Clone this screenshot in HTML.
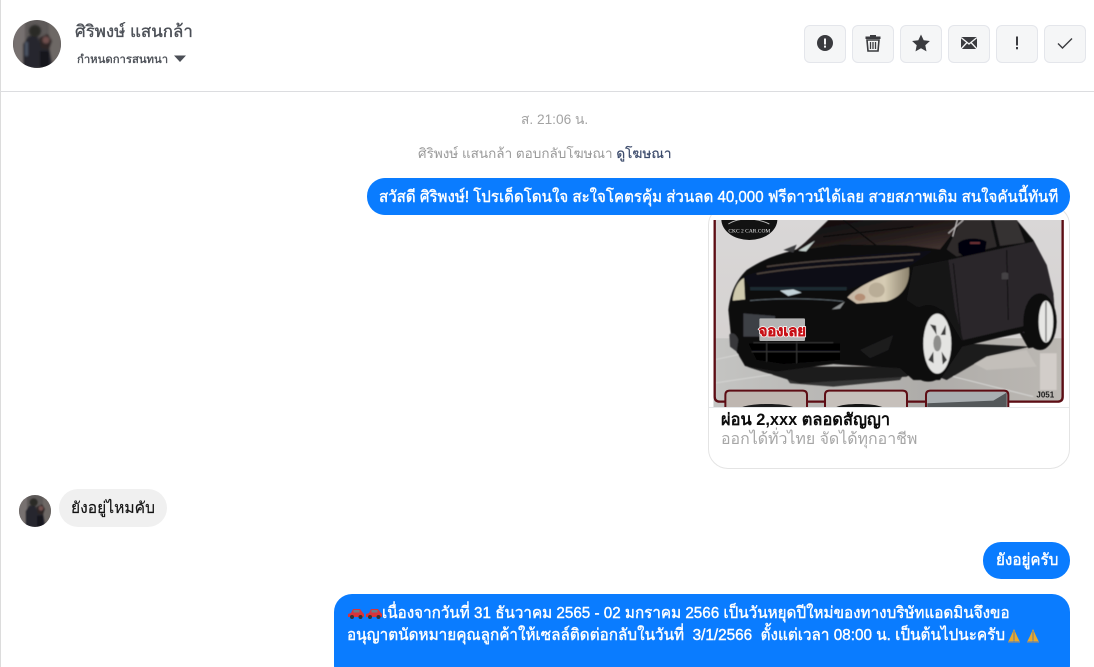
<!DOCTYPE html>
<html lang="th"><head><meta charset="utf-8"><title>Chat</title>
<style>
html,body{margin:0;padding:0;background:#fff;width:1094px;height:667px;overflow:hidden}
body{position:relative;font-family:"Liberation Sans","Noto Sans CJK SC",sans-serif}
.t{position:absolute;white-space:nowrap;line-height:20px;font-family:"Liberation Sans","Noto Sans CJK SC",sans-serif;transform-origin:left center}
.b{position:absolute;background:#0a7cff;border-radius:18px}
.btn{position:absolute;top:25px;width:40px;height:36px;background:#f5f6f7;border:1px solid #e4e6eb;border-radius:6px}
.btn svg{position:absolute;left:7px;top:5px}
.w{color:#fff;font-size:16px;font-weight:500;-webkit-text-stroke:.4px #fff}
</style></head><body>
<div style="position:absolute;left:0;top:0;width:1px;height:667px;background:#dcdcdc"></div>
<div style="position:absolute;left:0;top:91px;width:1094px;height:1px;background:#dcdde0"></div>

<svg style="position:absolute;left:13px;top:20px" width="48" height="48" viewBox="0 0 48 48">
<defs><clipPath id="a"><circle cx="24" cy="24" r="24"/></clipPath><filter id="bl"><feGaussianBlur stdDeviation="1"/></filter></defs>
<g clip-path="url(#a)"><rect width="48" height="48" fill="#5d5958"/><g filter="url(#bl)">
<rect x="0" y="0" width="12" height="48" fill="#77716f"/><rect x="36" y="0" width="12" height="48" fill="#6d6765"/>
<path d="M10 48V24l6-8h8l4 8 8 2 4 22z" fill="#25262e"/><circle cx="22" cy="11" r="6" fill="#2c2928"/><path d="M26 18l9-4 4 7-3 9-8-2z" fill="#2d2627"/><circle cx="33" cy="20" r="3.500" fill="#70504d"/><rect x="27" y="31" width="9" height="17" fill="#17161a"/><rect x="12" y="22" width="3" height="14" fill="#4c5465"/></g></g></svg>
<div class="t" style="left:75px;top:22px;font-size:16.900px;color:#4b4f56;-webkit-text-stroke:.35px #4b4f56">ศิริพงษ์ แสนกล้า</div>
<div class="t" style="left:77px;top:50px;font-size:11.300px;color:#4b4f56;-webkit-text-stroke:.35px #4b4f56">กำหนดการสนทนา</div>
<svg style="position:absolute;left:174px;top:55px" width="13" height="8"><path d="M0 .5h12L6 7z" fill="#4b4f56"/></svg>

<div class="btn" style="left:804px"><svg width="24" height="24" viewBox="0 0 24 24"><circle cx="13" cy="12" r="8" fill="#3a3b3f"/><rect x="12" y="7.500" width="2" height="6" fill="#f5f6f7"/><rect x="12" y="14.600" width="2" height="2" fill="#f5f6f7"/></svg></div>
<div class="btn" style="left:852px"><svg width="24" height="24" viewBox="0 0 24 24"><path d="M10 5.500V4h6v1.500h4.500V8h-15V5.500z" fill="#3a3b3f"/><path d="M7 9h12l-1 11H8z" fill="none" stroke="#3a3b3f" stroke-width="1.600"/><path d="M10.500 11v7M13 11v7M15.500 11v7" stroke="#3a3b3f" stroke-width="1.300"/></svg></div>
<div class="btn" style="left:900px"><svg width="24" height="24" viewBox="0 0 24 24"><path d="M13 3.500l2.700 5.700 6.200.8-4.600 4.200 1.200 6.200L13 17.300l-5.500 3.100 1.200-6.200L4.100 10l6.200-.8z" fill="#3a3b3f"/></svg></div>
<div class="btn" style="left:948px"><svg width="24" height="24" viewBox="0 0 24 24"><rect x="5" y="6" width="16" height="12" fill="#3a3b3f"/><path d="M5 6.500l8 6.500 8-6.500M5 18l6-6.500M21 18l-6-6.500" stroke="#f5f6f7" stroke-width="1.300" fill="none"/></svg></div>
<div class="btn" style="left:996px"><svg width="24" height="24" viewBox="0 0 24 24"><rect x="12" y="5.500" width="2" height="9" fill="#3a3b3f"/><rect x="12" y="16" width="2" height="2.300" fill="#3a3b3f"/></svg></div>
<div class="btn" style="left:1044px"><svg width="24" height="24" viewBox="0 0 24 24"><path d="M6 12.500l4.500 4.500L20 7.500" fill="none" stroke="#3a3b3f" stroke-width="1.400"/></svg></div>

<div class="t" style="left:521px;top:110px;font-size:13.700px;color:#a3a3a3">ส. 21:06 น.</div>
<div class="t" style="left:418px;top:144px;font-size:13.500px;color:#9a9a9a">ศิริพงษ์ แสนกล้า ตอบกลับโฆษณา <span style="color:#3b4a6b;-webkit-text-stroke:.2px #3b4a6b">ดูโฆษณา</span></div>

<div style="position:absolute;left:708px;top:205px;width:360px;height:262px;border:1px solid #e4e4e4;border-radius:20px;background:#fff"></div>
<div class="b" style="left:367px;top:178px;width:703px;height:37px"></div>
<div class="t w" style="left:379px;top:188px;transform:scaleX(.943)">สวัสดี ศิริพงษ์! โปรเด็ดโดนใจ สะใจโคตรคุ้ม ส่วนลด 40,000 ฟรีดาวน์ได้เลย สวยสภาพเดิม สนใจคันนี้ทันที</div>

<svg style="position:absolute;left:700px;top:210px" width="380" height="197.300" viewBox="0 0 1140 592">
<defs>
<clipPath id="c"><path d="M40 30H1092V560q0 18-18 18H925V592H40V560z"/></clipPath>
<filter id="s" x="-5%" y="-5%" width="110%" height="110%"><feGaussianBlur stdDeviation="1.500"/></filter>
<linearGradient id="wall" x1="0" y1="0" x2="0" y2="1"><stop offset="0" stop-color="#d9d7d7"/><stop offset="1" stop-color="#d3cfcd"/></linearGradient>
<linearGradient id="fl" x1="0" y1="0" x2="1" y2="0"><stop offset="0" stop-color="#c4c4c2"/><stop offset=".6" stop-color="#aeaca9"/><stop offset="1" stop-color="#bcb8b3"/></linearGradient>
<linearGradient id="ws" x1="0" y1="0" x2="1" y2="1"><stop offset="0" stop-color="#0d0b0c"/><stop offset=".55" stop-color="#241c1b"/><stop offset="1" stop-color="#4a3a37"/></linearGradient>
<linearGradient id="hl" x1="0" y1="0" x2="1" y2="0"><stop offset="0" stop-color="#c4b4a2"/><stop offset=".6" stop-color="#d6ccb4"/><stop offset="1" stop-color="#8d836e"/></linearGradient>
</defs>
<g clip-path="url(#c)">
<rect x="40" y="30" width="1052" height="562" fill="url(#wall)"/>
<rect x="40" y="385" width="1052" height="207" fill="url(#fl)"/>
<g filter="url(#s)">
<path d="M40 450L300 395M40 520L240 490M760 500L1000 560" stroke="#d4d4d2" stroke-width="3"/>
<path d="M1020 430h50v110h-50z" fill="#d2cdc9"/>
<path d="M800 450L980 420L1010 470L860 480z" fill="#c3bfba"/>
<path d="M250 490L620 480L600 510L400 530L270 520z" fill="#353434"/>
<path d="M140 470L640 470L740 510L860 440L990 410L790 400L620 500L300 520z" fill="#1f1d1e"/>
<path d="M85 300C90 260 100 220 140 180C200 140 250 130 290 118L400 30H950L1000 90L1040 165L1060 250L1066 340L1040 405L985 415L960 370L790 405L760 450L720 510L640 510L600 475L400 462L230 485L135 468L95 400Z" fill="#0c0b0d"/>
<path d="M745 150L1000 95L1040 165L1060 250L1066 340L1040 395L960 365L790 395L765 300Z" fill="#29262a"/>
<path d="M920 120L925 330M760 160L785 395" stroke="#100f11" stroke-width="3" fill="none"/>
<path d="M640 170L745 150L765 300L790 400L730 300L650 290L620 270Z" fill="#171619"/>
<path d="M290 122L385 30H790L720 118L620 106L420 104Z" fill="url(#ws)"/>
<path d="M430 30L530 108M370 80L640 50" stroke="#090808" stroke-width="4" fill="none"/>
<path d="M295 122L345 92L318 124Z" fill="#c5d0cc"/>
<path d="M250 120L290 104L280 128Z" fill="#3a3a3c"/>
<path d="M740 118L785 30H872L890 110L770 140Z" fill="#2f2a2c"/>
<path d="M882 30H950L975 98L900 108Z" fill="#353033"/>
<path d="M745 70L790 30" stroke="#a9a5a5" stroke-width="4"/>
<path d="M758 80L772 30" stroke="#c9c5c5" stroke-width="3"/>
<path d="M774 100C790 82 840 82 860 95L855 125L790 138L776 128Z" fill="#060607"/>
<path d="M810 99h30" stroke="#6a3034" stroke-width="6"/>
<path d="M130 200C250 150 480 130 700 122L628 170L445 240L150 235Z" fill="#100f12"/>
<path d="M170 192C300 168 500 162 640 150M200 170C350 150 500 145 660 132" stroke="#4a403a" stroke-width="5" fill="none"/>
<path d="M150 236H440" stroke="#1d2a30" stroke-width="10"/>
<path d="M240 242l40-4 25 10-40 10z" fill="#c3d2d8"/>
<path d="M150 272C230 264 340 264 430 274" stroke="#596268" stroke-width="3" fill="none"/>
<path d="M395 298l40-24-15 22z" fill="#8b8f90"/>
<path d="M442 262C480 222 560 190 627 172C632 225 605 262 560 274L470 281Z" fill="url(#hl)"/>
<ellipse cx="530" cy="240" rx="24" ry="22" fill="#b9ad97"/><ellipse cx="480" cy="262" rx="16" ry="11" fill="#b58f76"/>
<path d="M98 272C100 240 115 212 132 204L135 268Z" fill="#cfc9ad"/>
<path d="M130 310L225 318V380H130Z" fill="#3d4045"/>
<path d="M88 375C92 365 110 370 115 390L110 425L90 410Z" fill="#37383b"/>
<path d="M145 400H420V450L250 462L170 450Z" fill="#060606"/>
<path d="M160 398H400M155 425H420M200 395V455M290 395V460" stroke="#3a3a3b" stroke-width="3"/>
<path d="M480 420L580 375L565 420L510 445Z" fill="#1b1b1d"/>
<path d="M770 395L985 345L985 362L780 412Z" fill="#0c0b0c"/>
<path d="M905 190a14 10 0 0 1 20 0v18h-20z" fill="#454244"/>
<ellipse cx="1020" cy="335" rx="50" ry="85" fill="#0b0b0c"/>
<ellipse cx="1038" cy="335" rx="22" ry="63" fill="#e6e6e4"/>
<path d="M1038 275V395" stroke="#777" stroke-width="4"/>
<ellipse cx="685" cy="400" rx="78" ry="115" fill="#0a0a0b"/>
<ellipse cx="712" cy="401" rx="42" ry="90" fill="#e4e4e2"/>
<path d="M710 375l-20-32 18 4z M722 375l15-30v30z M700 425l-15 25 16 10z M725 425l16 25-13 14z" fill="#3a3a3a"/>
<ellipse cx="712" cy="400" rx="12" ry="24" fill="#8e8e8c"/>
</g>
<ellipse cx="148" cy="28" rx="84" ry="62" fill="#121212"/>
<path d="M85 42C120 20 170 24 208 42" stroke="#bbb" stroke-width="3" fill="none"/>
<text x="148" y="68" text-anchor="middle" font-family="Liberation Serif,serif" font-size="16.500" fill="#e8e8e8">CKC 2 CAR.COM</text>
<rect x="178" y="325" width="137" height="68" rx="3" fill="#b3b3b3"/>
<text x="247" y="378" text-anchor="middle" font-family="Liberation Sans,Noto Sans CJK SC,sans-serif" font-size="44" font-weight="700" fill="#c71016" stroke="#fff" stroke-width="6" paint-order="stroke">จองเลย</text>
<text x="247" y="378" text-anchor="middle" font-family="Liberation Sans,Noto Sans CJK SC,sans-serif" font-size="44" font-weight="700" fill="#c71016" stroke="#c71016" stroke-width="1.500">จองเลย</text>
<text x="1036" y="562" text-anchor="middle" font-family="Liberation Sans,sans-serif" font-size="24" font-weight="700" fill="#1a1a1a">J051</text>
</g>
<path d="M44 30V560q0 15 15 15H1073q15 0 15-15V30" fill="none" stroke="#5d0d14" stroke-width="7"/>
<g stroke="#5d0d14" stroke-width="6">
<path d="M76 610V555q0-13 13-13H308q13 0 13 13V610z" fill="#beb6b0"/>
<path d="M375 610V555q0-13 13-13H608q13 0 13 13V610z" fill="#c6c0bb"/>
<path d="M678 610V555q0-13 13-13H912q13 0 13 13V610z" fill="#a9aeb1"/>
</g>
<path d="M120 594C150 578 260 578 285 594z" fill="#1b1b1c"/>
<path d="M405 594C420 578 530 578 552 594z" fill="#141414"/>
<path d="M682 580L880 572L920 548V592H682z" fill="#54585a"/>
</svg>
<div style="position:absolute;left:709px;top:407px;width:360px;height:1px;background:#e6e8ea"></div>
<div class="t" style="left:721px;top:410px;font-size:16.400px;font-weight:700;color:#0c0c0c">ผ่อน 2,xxx ตลอดสัญญา</div>
<div class="t" style="left:721px;top:430px;font-size:15.900px;color:#a6a6a6">ออกได้ทั่วไทย จัดได้ทุกอาชีพ</div>

<svg style="position:absolute;left:19px;top:495px" width="32" height="32" viewBox="0 0 48 48">
<g clip-path="url(#a)"><rect width="48" height="48" fill="#5d5958"/><g filter="url(#bl)">
<rect x="0" y="0" width="12" height="48" fill="#77716f"/><rect x="36" y="0" width="12" height="48" fill="#6d6765"/>
<path d="M10 48V24l6-8h8l4 8 8 2 4 22z" fill="#25262e"/><circle cx="22" cy="11" r="6" fill="#2c2928"/><path d="M26 18l9-4 4 7-3 9-8-2z" fill="#2d2627"/><circle cx="33" cy="20" r="3.500" fill="#70504d"/><rect x="27" y="31" width="9" height="17" fill="#17161a"/></g></g></svg>
<div style="position:absolute;left:59px;top:489px;width:108px;height:38px;border-radius:19px;background:#f0f0f0"></div>
<div class="t" style="left:71px;top:499px;font-size:15.600px;color:#111;-webkit-text-stroke:.15px #111">ยังอยู่ไหมคับ</div>

<div class="b" style="left:983px;top:542px;width:87px;height:37px"></div>
<div class="t w" style="left:996px;top:551px;transform:scaleX(.95)">ยังอยู่ครับ</div>

<div class="b" style="left:334px;top:594px;width:736px;height:90px"></div>
<svg style="position:absolute;left:347px;top:606px" width="36" height="14" viewBox="0 0 36 14">
<g><path d="M1 11V8l3-1 2-4h7l3 4 1 1v3z" fill="#d8343a"/><rect x="6.500" y="4" width="6" height="2.500" fill="#6b7c88"/><circle cx="5" cy="11" r="2" fill="#333"/><circle cx="13.500" cy="11" r="2" fill="#333"/></g>
<g transform="translate(18 0)"><path d="M1 11V8l3-1 2-4h7l3 4 1 1v3z" fill="#d8343a"/><rect x="6.500" y="4" width="6" height="2.500" fill="#6b7c88"/><circle cx="5" cy="11" r="2" fill="#333"/><circle cx="13.500" cy="11" r="2" fill="#333"/></g>
</svg>
<div class="t w" style="left:382px;top:604px;transform:scaleX(.951)">เนื่องจากวันที่ 31 ธันวาคม 2565 - 02 มกราคม 2566 เป็นวันหยุดปีใหม่ของทางบริษัทแอดมินจึงขอ</div>
<div class="t w" style="left:347px;top:626px;transform:scaleX(.955)">อนุญาตนัดหมายคุณลูกค้าให้เซลล์ติดต่อกลับในวันที่&nbsp; 3/1/2566&nbsp; ตั้งแต่เวลา 08:00 น. เป็นต้นไปนะครับ</div>
<svg style="position:absolute;left:1006px;top:628px" width="36" height="16" viewBox="0 0 36 16">
<path d="M8 1L5 8 2 14h5l1-2 1 2h5l-3-6z" fill="#e9a92d"/><path d="M8 3v9" stroke="#6d7c8c"/><path d="M2 14h12" stroke="#7c8a96" stroke-width="1.500"/>
<path d="M27 1l-3 7-3 6h5l1-2 1 2h5l-3-6z" fill="#e9a92d"/><path d="M27 3v9" stroke="#6d7c8c"/><path d="M21 14h12" stroke="#7c8a96" stroke-width="1.500"/>
</svg>
</body></html>
